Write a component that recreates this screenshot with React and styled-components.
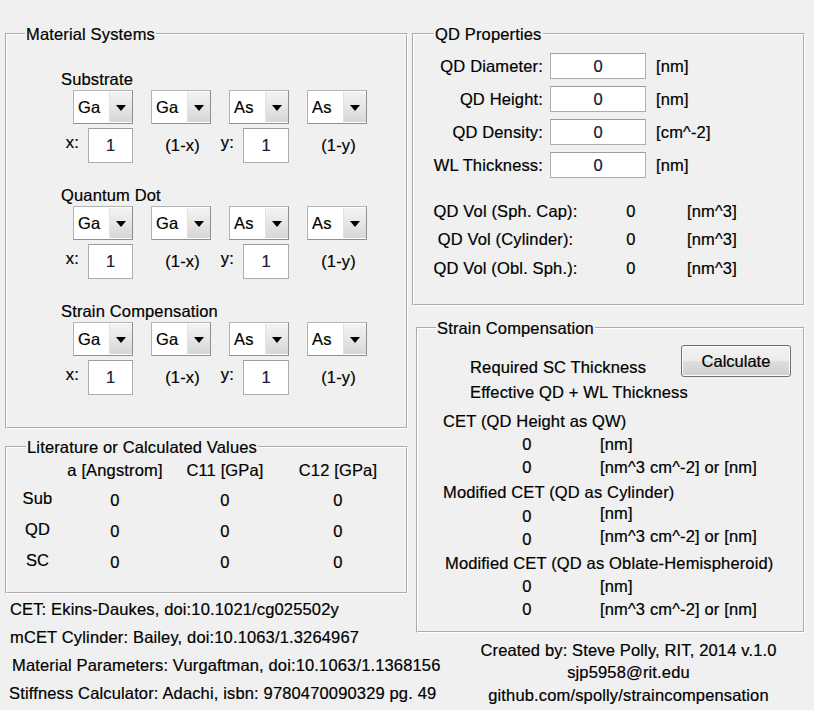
import React from "react";
import styled, { createGlobalStyle } from "styled-components";

const GlobalStyle = createGlobalStyle`
  html, body {
    margin: 0;
    padding: 0;
    background: #f0f0f0;
  }
  body {
    font-family: "Liberation Sans", Arial, sans-serif;
    font-size: 16.5px;
    letter-spacing: 0.15px;
    color: #000;
    -webkit-text-stroke: 0.2px #000;
  }
`;

const Window = styled.div`
  width: 814px;
  height: 710px;
  box-sizing: border-box;
  padding: 25px 0 0 5px;
  display: flex;
  align-items: flex-start;
  gap: 4px;
  overflow: hidden;
`;

const Column = styled.div`
  width: ${(p) => p.$width}px;
  display: flex;
  flex-direction: column;
`;

const Panel = styled.fieldset`
  margin: ${(p) => p.$top || 0}px 0 0 ${(p) => p.$left || 0}px;
  padding: 0;
  min-width: 0;
  border: 2px groove #fff;
`;

const Legend = styled.legend`
  margin-left: ${(p) => p.$offset}px;
  padding: 0 1px;
  line-height: 18px;
`;

/* ---- material systems ---- */

const MaterialBody = styled.div`
  padding: 27px 0 32px 54px;
  display: flex;
  flex-direction: column;
  gap: 23px;
`;

const Group = styled.div`
  display: flex;
  flex-direction: column;
`;

const GroupLabel = styled.div`
  line-height: 18px;
`;

const ElementRow = styled.div`
  display: grid;
  grid-template-columns: repeat(4, 60px);
  column-gap: 18px;
  height: ${(p) => p.$h}px;
  margin: ${(p) => p.$mt}px 0 0 12px;
`;

const Dropdown = styled.div`
  box-sizing: border-box;
  height: 34px;
  border: 1px solid #b4b4b4;
  border-right-color: #8f8f8f;
  border-bottom-color: #8f8f8f;
  background: #fff;
  display: flex;
  align-items: stretch;
`;

const DropText = styled.span`
  flex: 1;
  padding-left: 4px;
  display: flex;
  align-items: center;
`;

const DropButton = styled.span`
  width: 22px;
  margin: 1px 0;
  background: linear-gradient(to bottom, #f3f3f3 0%, #e6e6e6 50%, #d6d6d6 100%);
  border-left: 1px solid #e2e2e2;
  display: flex;
  align-items: center;
  justify-content: center;
`;

const Arrow = styled.span`
  width: 0;
  height: 0;
  border-left: 5px solid transparent;
  border-right: 5px solid transparent;
  border-top: 6px solid #000;
  margin-top: 1px;
`;

const FracCell = styled.div`
  display: flex;
  justify-content: flex-end;
  align-items: flex-start;
  gap: 9px;
`;

const VarLabel = styled.span`
  line-height: 18px;
  margin-top: 5px;
  white-space: nowrap;
`;

const Complement = styled.div`
  display: flex;
  align-items: center;
  justify-content: center;
  padding-left: 3px;
  white-space: nowrap;
`;

const Field = styled.input`
  box-sizing: border-box;
  width: ${(p) => p.$w}px;
  height: ${(p) => p.$h}px;
  margin: 0;
  padding: 0;
  border: 1px solid #abadb3;
  border-top-color: #9a9ca3;
  background: #fff;
  font: inherit;
  color: #1b1b3a;
  text-align: center;
  outline: none;
`;

/* ---- literature ---- */

const LitGrid = styled.div`
  display: grid;
  grid-template-columns: 61px 94px 126px 100px;
  grid-template-rows: 24px repeat(3, 31px);
  align-items: center;
  justify-items: center;
  padding: 2px 0 17px;
`;

const LitCell = styled.div`
  line-height: 18px;
  white-space: nowrap;
  padding-top: ${(p) => p.$drop || 0}px;
`;

const Refs = styled.div`
  margin-top: 1px;
  display: flex;
  flex-direction: column;
`;

const RefLine = styled.div`
  line-height: 28px;
  padding-left: ${(p) => p.$indent}px;
  white-space: nowrap;
`;

/* ---- qd properties ---- */

const PropGrid = styled.div`
  display: grid;
  grid-template-columns: 129px 96px auto;
  grid-auto-rows: 26px;
  row-gap: 7px;
  column-gap: 7px;
  align-items: center;
  padding-top: 10px;
`;

const PropLabel = styled.div`
  text-align: right;
  white-space: nowrap;
`;

const Unit = styled.div`
  padding-left: ${(p) => p.$pad || 0}px;
  padding-bottom: ${(p) => p.$lift || 0}px;
  white-space: nowrap;
`;

const VolGrid = styled.div`
  display: grid;
  grid-template-columns: 151px 100px auto;
  grid-auto-rows: 28.5px;
  align-items: center;
  padding: 19px 0 21.5px 16px;
`;

const Centered = styled.div`
  text-align: center;
  white-space: nowrap;
`;

/* ---- strain compensation ---- */

const ScTop = styled.div`
  display: grid;
  grid-template-columns: 1fr 110px;
  grid-template-rows: 34.5px 25px;
  padding: 8px 12px 0 52px;
`;

const ScLine = styled.div`
  line-height: 25px;
  white-space: nowrap;
  align-self: end;
  grid-column: ${(p) => (p.$span ? "1 / -1" : "auto")};
`;

const CalcButton = styled.button`
  align-self: start;
  height: 32px;
  width: 110px;
  margin: 0;
  padding: 0;
  border: 1px solid #707070;
  border-radius: 3px;
  background: linear-gradient(to bottom, #f2f2f2 0%, #ebebeb 50%, #dddddd 51%, #cfcfcf 100%);
  box-shadow: inset 0 0 0 1px #fcfcfc;
  font: inherit;
  color: #000;
`;

const ScSections = styled.div`
  padding: 5px 0 10px 0;
  display: flex;
  flex-direction: column;
  gap: 2px;
`;

const ScSection = styled.div`
  display: flex;
  flex-direction: column;
`;

const ScHeading = styled.div`
  line-height: 23px;
  padding-left: ${(p) => p.$indent}px;
  white-space: nowrap;
`;

const ScValueRow = styled.div`
  display: grid;
  grid-template-columns: 60px auto;
  column-gap: 43px;
  height: 23px;
  align-items: center;
  padding-left: 79px;
`;

const Credits = styled.div`
  margin-top: 6px;
  padding-left: 40px;
  text-align: center;
  line-height: 22.5px;
  white-space: nowrap;
`;

const elements = ["Ga", "Ga", "As", "As"];

const MaterialGroup = ({ title }) => (
  <Group>
    <GroupLabel>{title}</GroupLabel>
    <ElementRow $h={34} $mt={2}>
      {elements.map((el, i) => (
        <Dropdown key={i}>
          <DropText>{el}</DropText>
          <DropButton>
            <Arrow />
          </DropButton>
        </Dropdown>
      ))}
    </ElementRow>
    <ElementRow $h={35} $mt={4}>
      <FracCell>
        <VarLabel>x:</VarLabel>
        <Field $w={45} $h={35} readOnly value="1" />
      </FracCell>
      <Complement>(1-x)</Complement>
      <FracCell>
        <VarLabel>y:</VarLabel>
        <Field $w={46} $h={35} readOnly value="1" />
      </FracCell>
      <Complement>(1-y)</Complement>
    </ElementRow>
  </Group>
);

const litRows = ["Sub", "QD", "SC"];

const props = [
  ["QD Diameter:", "[nm]"],
  ["QD Height:", "[nm]"],
  ["QD Density:", "[cm^-2]"],
  ["WL Thickness:", "[nm]"],
];

const volumes = ["QD Vol (Sph. Cap):", "QD Vol (Cylinder):", "QD Vol (Obl. Sph.):"];

const scSections = [
  { title: "CET (QD Height as QW)", indent: 25, lift: 0 },
  { title: "Modified CET (QD as Cylinder)", indent: 25, lift: 6 },
  { title: "Modified CET (QD as Oblate-Hemispheroid)", indent: 27, lift: 0 },
];

export default function App() {
  return (
    <>
      <GlobalStyle />
      <Window>
        <Column $width={403}>
          <Panel>
            <Legend $offset={18}>Material Systems</Legend>
            <MaterialBody>
              <MaterialGroup title="Substrate" />
              <MaterialGroup title="Quantum Dot" />
              <MaterialGroup title="Strain Compensation" />
            </MaterialBody>
          </Panel>

          <Panel $top={9}>
            <Legend $offset={19}>Literature or Calculated Values</Legend>
            <LitGrid>
              <span />
              <LitCell>a [Angstrom]</LitCell>
              <LitCell>C11 [GPa]</LitCell>
              <LitCell>C12 [GPa]</LitCell>
              {litRows.map((r) => (
                <React.Fragment key={r}>
                  <LitCell>{r}</LitCell>
                  <LitCell $drop={5}>0</LitCell>
                  <LitCell $drop={5}>0</LitCell>
                  <LitCell $drop={5}>0</LitCell>
                </React.Fragment>
              ))}
            </LitGrid>
          </Panel>

          <Refs>
            <RefLine $indent={5}>CET: Ekins-Daukes, doi:10.1021/cg025502y</RefLine>
            <RefLine $indent={5}>mCET Cylinder: Bailey, doi:10.1063/1.3264967</RefLine>
            <RefLine $indent={7}>Material Parameters: Vurgaftman, doi:10.1063/1.1368156</RefLine>
            <RefLine $indent={4}>Stiffness Calculator: Adachi, isbn: 9780470090329 pg. 49</RefLine>
          </Refs>
        </Column>

        <Column $width={393}>
          <Panel>
            <Legend $offset={20}>QD Properties</Legend>
            <PropGrid>
              {props.map(([label, unit]) => (
                <React.Fragment key={label}>
                  <PropLabel>{label}</PropLabel>
                  <Field $w={96} $h={26} readOnly value="0" />
                  <Unit $pad={3}>{unit}</Unit>
                </React.Fragment>
              ))}
            </PropGrid>
            <VolGrid>
              {volumes.map((v) => (
                <React.Fragment key={v}>
                  <Centered>{v}</Centered>
                  <Centered>0</Centered>
                  <Unit $pad={6}>[nm^3]</Unit>
                </React.Fragment>
              ))}
            </VolGrid>
          </Panel>

          <Panel $top={13} $left={4}>
            <Legend $offset={18}>Strain Compensation</Legend>
            <ScTop>
              <ScLine>Required SC Thickness</ScLine>
              <CalcButton type="button">Calculate</CalcButton>
              <ScLine $span>Effective QD + WL Thickness</ScLine>
            </ScTop>
            <ScSections>
              {scSections.map((s) => (
                <ScSection key={s.title}>
                  <ScHeading $indent={s.indent}>{s.title}</ScHeading>
                  <ScValueRow>
                    <Centered>0</Centered>
                    <Unit $lift={s.lift}>[nm]</Unit>
                  </ScValueRow>
                  <ScValueRow>
                    <Centered>0</Centered>
                    <Unit $lift={s.lift}>[nm^3 cm^-2] or [nm]</Unit>
                  </ScValueRow>
                </ScSection>
              ))}
            </ScSections>
          </Panel>

          <Credits>
            <div>Created by: Steve Polly, RIT, 2014 v.1.0</div>
            <div>sjp5958@rit.edu</div>
            <div>github.com/spolly/straincompensation</div>
          </Credits>
        </Column>
      </Window>
    </>
  );
}
